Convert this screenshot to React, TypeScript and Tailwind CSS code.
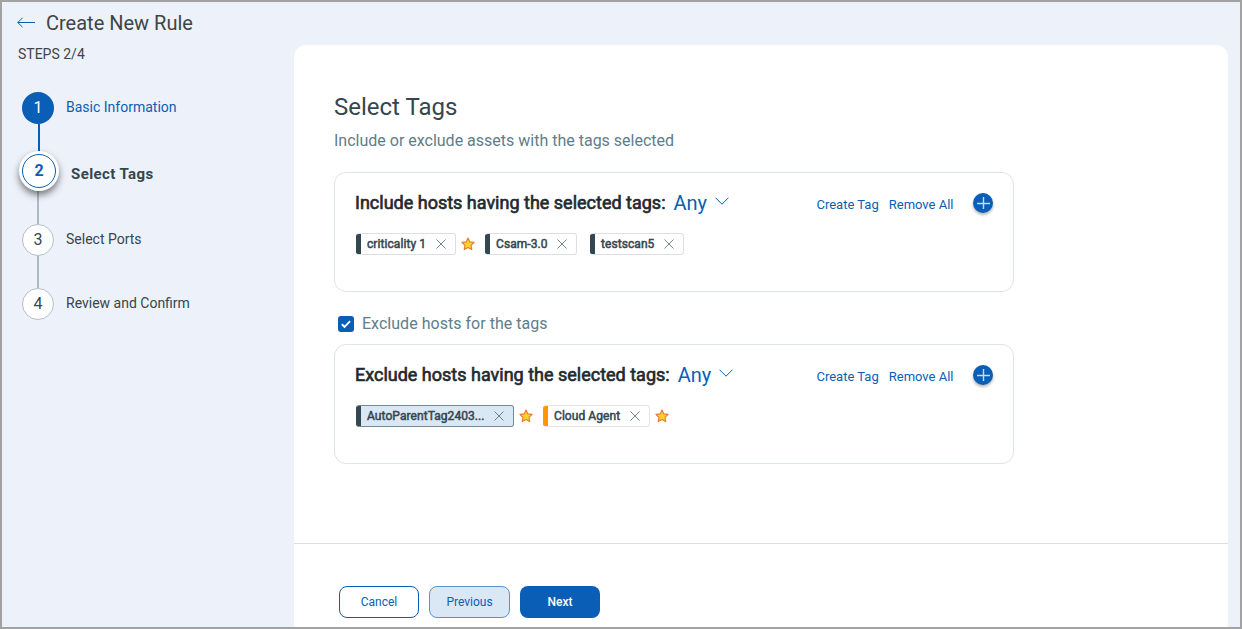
import type { ReactNode } from 'react';

type Tag = {
  label: string;
  bar: string;
  frame: string;
  favorite: boolean;
  after: string;
};

const includeTags: Tag[] = [
  { label: 'criticality 1', bar: 'bg-[#34464e]', frame: 'w-[100px] border-[#dce0e2] bg-white', favorite: true, after: 'mr-[10px]' },
  { label: 'Csam-3.0', bar: 'bg-[#34464e]', frame: 'w-[92px] border-[#dce0e2] bg-white', favorite: false, after: 'mr-[13px]' },
  { label: 'testscan5', bar: 'bg-[#34464e]', frame: 'w-[94px] border-[#dce0e2] bg-white', favorite: false, after: '' },
];

const excludeTags: Tag[] = [
  { label: 'AutoParentTag2403...', bar: 'bg-[#34464e]', frame: 'w-[158px] border-[#718b9b] bg-[#dae7f5]', favorite: true, after: 'mr-[10px]' },
  { label: 'Cloud Agent', bar: 'bg-[#ff9800]', frame: 'w-[107px] border-[#e6e6e6] bg-white', favorite: true, after: '' },
];

function Star() {
  return (
    <svg className="ml-[5px] size-[14px] shrink-0" viewBox="0 0 14 14">
      <path
        d="M7 1l1.800 3.900 4.300.500-3.100 3 .8 4.200L7 10.500 3.200 12.600l.8-4.200-3.100-3 4.300-.500z"
        fill="#ffd42a"
        stroke="#e8792b"
        strokeWidth="1.1"
        strokeLinejoin="round"
      />
    </svg>
  );
}

function TagChip({ tag }: { tag: Tag }) {
  return (
    <div className={`flex items-center ${tag.after}`}>
      <div className={`flex h-[22px] items-center overflow-hidden rounded-[3px] border border-l-0 ${tag.frame}`}>
        <span className={`-my-px h-[22px] w-[5px] shrink-0 ${tag.bar}`} />
        <span className="ml-1.5 text-[12px] tracking-[0.07px] whitespace-nowrap text-[#34464e] [-webkit-text-stroke:0.5px_#34464e]">{tag.label}</span>
        <svg className="mr-[9.5px] ml-auto size-[10px] shrink-0" viewBox="0 0 10 10">
          <path d="M.5.5l9 9M9.500.5l-9 9" stroke="#4f6975" strokeWidth="0.8" fill="none" />
        </svg>
      </div>
      {tag.favorite && <Star />}
    </div>
  );
}

function TagCard({ title, tags }: { title: string; tags: Tag[] }) {
  return (
    <section className="h-[120px] w-[680px] rounded-xl border border-[#dfe4e6] px-5 pt-[17px]">
      <div className="flex h-[26px] items-center">
        <h2 className="-mt-0.5 text-[18px] whitespace-nowrap text-[#1f2a30] [-webkit-text-stroke:0.65px_#1f2a30]">{title}</h2>
        <button className="ml-2 flex items-center text-[20px] text-[#0a5eb5]">
          Any
          <svg className="mb-1 ml-2 h-2 w-[14px]" viewBox="0 0 14 8">
            <path d="M.5.700L7 7.200 13.500.700" fill="none" stroke="#0a5eb5" strokeWidth="1" />
          </svg>
        </button>
        <div className="ml-auto flex items-center text-[13px] text-[#0a5eb5]">
          <a className="mt-[3px]">Create Tag</a>
          <a className="mt-[3px] ml-2.5">Remove All</a>
          <button className="ml-[19.5px] flex size-5 items-center justify-center rounded-full bg-[#0a5eb5] shadow-[0_2px_3px_rgba(0,0,0,0.3)]">
            <svg className="size-[14px]" viewBox="0 0 14 14">
              <path d="M7.500 1v12M1 7.500h13" stroke="#c4dcf3" strokeWidth="1.4" />
            </svg>
          </button>
        </div>
      </div>
      <div className="mt-[17px] flex pl-px">
        {tags.map((tag) => (
          <TagChip key={tag.label} tag={tag} />
        ))}
      </div>
    </section>
  );
}

function Step({ badge, label }: { badge: ReactNode; label: ReactNode }) {
  return (
    <li className="flex items-center">
      {badge}
      {label}
    </li>
  );
}

function Sidebar() {
  return (
    <aside className="w-[292px] shrink-0">
      <header className="flex h-[42px] items-center pl-[15px] text-[20px] text-[#3f4447]">
        <svg className="h-3 w-[19px]" viewBox="0 0 19 12">
          <path d="M5.500.800L.8 5.500 5.500 10.200M.8 5.500H18" fill="none" stroke="#0a5eb5" strokeWidth="1" />
        </svg>
        <h1 className="ml-[10px]">Create New Rule</h1>
      </header>
      <p className="h-5 pl-4 text-[14px] leading-5 text-[#3f4447]">STEPS 2/4</p>
      <ol className="mt-7 pl-[17px] text-[14px] text-[#34464e]">
        <Step
          badge={<span className="ml-[3px] flex size-8 items-center justify-center rounded-full bg-[#0a5eb5] text-[16px] text-white">1</span>}
          label={<span className="mb-0.5 ml-3 text-[#0a5eb5]">Basic Information</span>}
        />
        <li className="ml-[19px] h-[27px] w-0.5 bg-[#0a5eb5]" />
        <Step
          badge={
            <span className="flex size-10 items-center justify-center rounded-full bg-white shadow-[0_4px_7px_rgba(0,0,0,0.5)]">
              <span className="flex size-[34px] items-center justify-center rounded-full border border-[#0a5eb5] text-[16px] font-bold text-[#0a5eb5]">2</span>
            </span>
          }
          label={<span className="mt-[5px] ml-3 text-[15px] leading-5 font-bold tracking-[0.4px]">Select Tags</span>}
        />
        <li className="ml-[18px] h-[33px] w-0.5 bg-[#acbbc5]" />
        <Step
          badge={<span className="ml-[3px] flex size-8 items-center justify-center rounded-full border border-[#b3c0c9] bg-white text-[16px]">3</span>}
          label={<span className="mb-0.5 ml-3">Select Ports</span>}
        />
        <li className="ml-[18px] h-8 w-0.5 bg-[#acbbc5]" />
        <Step
          badge={<span className="ml-[3px] flex size-8 items-center justify-center rounded-full border border-[#b3c0c9] bg-white text-[16px]">4</span>}
          label={<span className="mb-0.5 ml-3">Review and Confirm</span>}
        />
      </ol>
    </aside>
  );
}

export default function App() {
  return (
    <div className="flex h-[629px] w-[1242px] overflow-hidden border-2 border-[#a2a2a2] bg-[#edf2fa] font-[Roboto,'Liberation_Sans',sans-serif]">
      <Sidebar />
      <main className="mt-[43px] flex w-[934px] flex-col rounded-t-[12px] bg-white">
        <div className="h-[498px] px-10 pt-[46px]">
          <h1 className="text-[24px] leading-8 text-[#34464e]">Select Tags</h1>
          <p className="mt-2 mb-[21px] text-[16px] leading-5 text-[#607d8b]">Include or exclude assets with the tags selected</p>
          <TagCard title="Include hosts having the selected tags:" tags={includeTags} />
          <label className="flex h-[52px] items-center pt-3 pl-1 text-[16px] tracking-[0.03px] text-[#607d8b]">
            <span className="mr-2 flex size-4 items-center justify-center rounded-[3px] bg-[#0a5eb5]">
              <svg className="size-3" viewBox="0 0 12 12">
                <path d="M1.800 6.200l2.700 2.600 5.600-5.600" fill="none" stroke="white" strokeWidth="1.9" />
              </svg>
            </span>
            Exclude hosts for the tags
          </label>
          <TagCard title="Exclude hosts having the selected tags:" tags={excludeTags} />
        </div>
        <footer className="flex grow gap-2.5 border-t border-[#dcdfe1] pt-[42px] pl-[45px] text-[12px]">
          <button className="h-8 w-20 rounded-lg border border-[#0a5eb5] bg-white text-[#0a5eb5]">Cancel</button>
          <button className="h-8 w-[81px] rounded-lg border border-[#5a93cd] bg-[#dae7f5] text-[#0a5eb5]">Previous</button>
          <button className="h-8 w-20 rounded-lg bg-[#0a5eb5] font-medium text-white">Next</button>
        </footer>
      </main>
    </div>
  );
}
